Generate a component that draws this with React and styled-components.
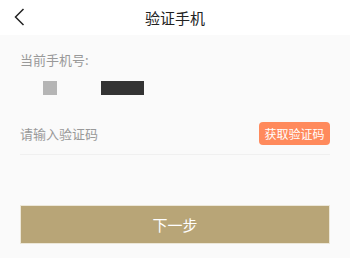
import styled, { createGlobalStyle } from "styled-components";

const GlobalStyle = createGlobalStyle`
  html, body {
    margin: 0;
    padding: 0;
    background: #fafafa;
    font-family: "Noto Sans CJK SC", "Noto Sans", sans-serif;
  }
`;

export default function App() {
  return (
    <Page>
      <GlobalStyle />
      {/* Header */}
      <Header>
        <BackButton aria-label="返回">
          <svg width="12" height="18" viewBox="0 0 12 18">
            <path d="M10.5 1 L2.5 9 L10.5 17" fill="none" stroke="#222" strokeWidth="1.5" />
          </svg>
        </BackButton>
        <Title>验证手机</Title>
      </Header>

      {/* Current phone */}
      <Body>
        <Label>当前手机号:</Label>
        <PhoneRow>
          <Mask $tone="light" $w={14} />
          <Mask $tone="dark" $w={43} />
        </PhoneRow>

        {/* Code input */}
        <CodeRow>
          <CodeInput placeholder="请输入验证码" />
          <SendButton>获取验证码</SendButton>
        </CodeRow>

        <NextButton>下一步</NextButton>
      </Body>
    </Page>
  );
}

const Page = styled.div`
  width: 350px;
  min-height: 258px;
  background: #fafafa;
`;

const Header = styled.header`
  position: relative;
  height: 35px;
  background: #fff;
  display: flex;
  align-items: center;
  justify-content: center;
`;

const BackButton = styled.button`
  position: absolute;
  left: 9px;
  top: 8px;
  border: 0;
  background: none;
  padding: 0 4px;
  display: flex;
`;

const Title = styled.h1`
  margin: 0;
  font-size: 15px;
  font-weight: 400;
  color: #222;
  line-height: 20px;
`;

const Body = styled.section`
  padding: 0 20px;
  display: flex;
  flex-direction: column;
`;

const Label = styled.div`
  margin-top: 15px;
  font-size: 13px;
  line-height: 20px;
  color: #999;
`;

const PhoneRow = styled.div`
  display: flex;
  align-items: center;
  gap: 44px;
  padding-left: 23px;
  margin-top: 11px;
  height: 14px;
`;

const Mask = styled.span`
  display: block;
  width: ${({ $w }) => $w}px;
  height: 14px;
  background: ${({ $tone }) => ($tone === "dark" ? "#333" : "#b5b5b5")};
`;

const CodeRow = styled.div`
  margin-top: 27px;
  display: flex;
  align-items: center;
  justify-content: space-between;
  padding-bottom: 9px;
  border-bottom: 1px solid #f0f0f0;
`;

const CodeInput = styled.input`
  border: 0;
  outline: none;
  background: transparent;
  padding: 0;
  font-family: inherit;
  font-size: 13px;
  color: #333;
  width: 150px;

  &::placeholder {
    color: #999;
  }
`;

const SendButton = styled.button`
  height: 23px;
  width: 71px;
  border: 0;
  border-radius: 4px;
  background: #ff8a5c;
  color: #fff;
  font-family: inherit;
  font-size: 12px;
  padding: 0;
`;

const NextButton = styled.button`
  margin-top: 50px;
  height: 39px;
  border: 1px solid #ece7d8;
  background: #b8a577;
  color: #fff;
  font-family: inherit;
  font-size: 15px;
  padding: 0;
`;
